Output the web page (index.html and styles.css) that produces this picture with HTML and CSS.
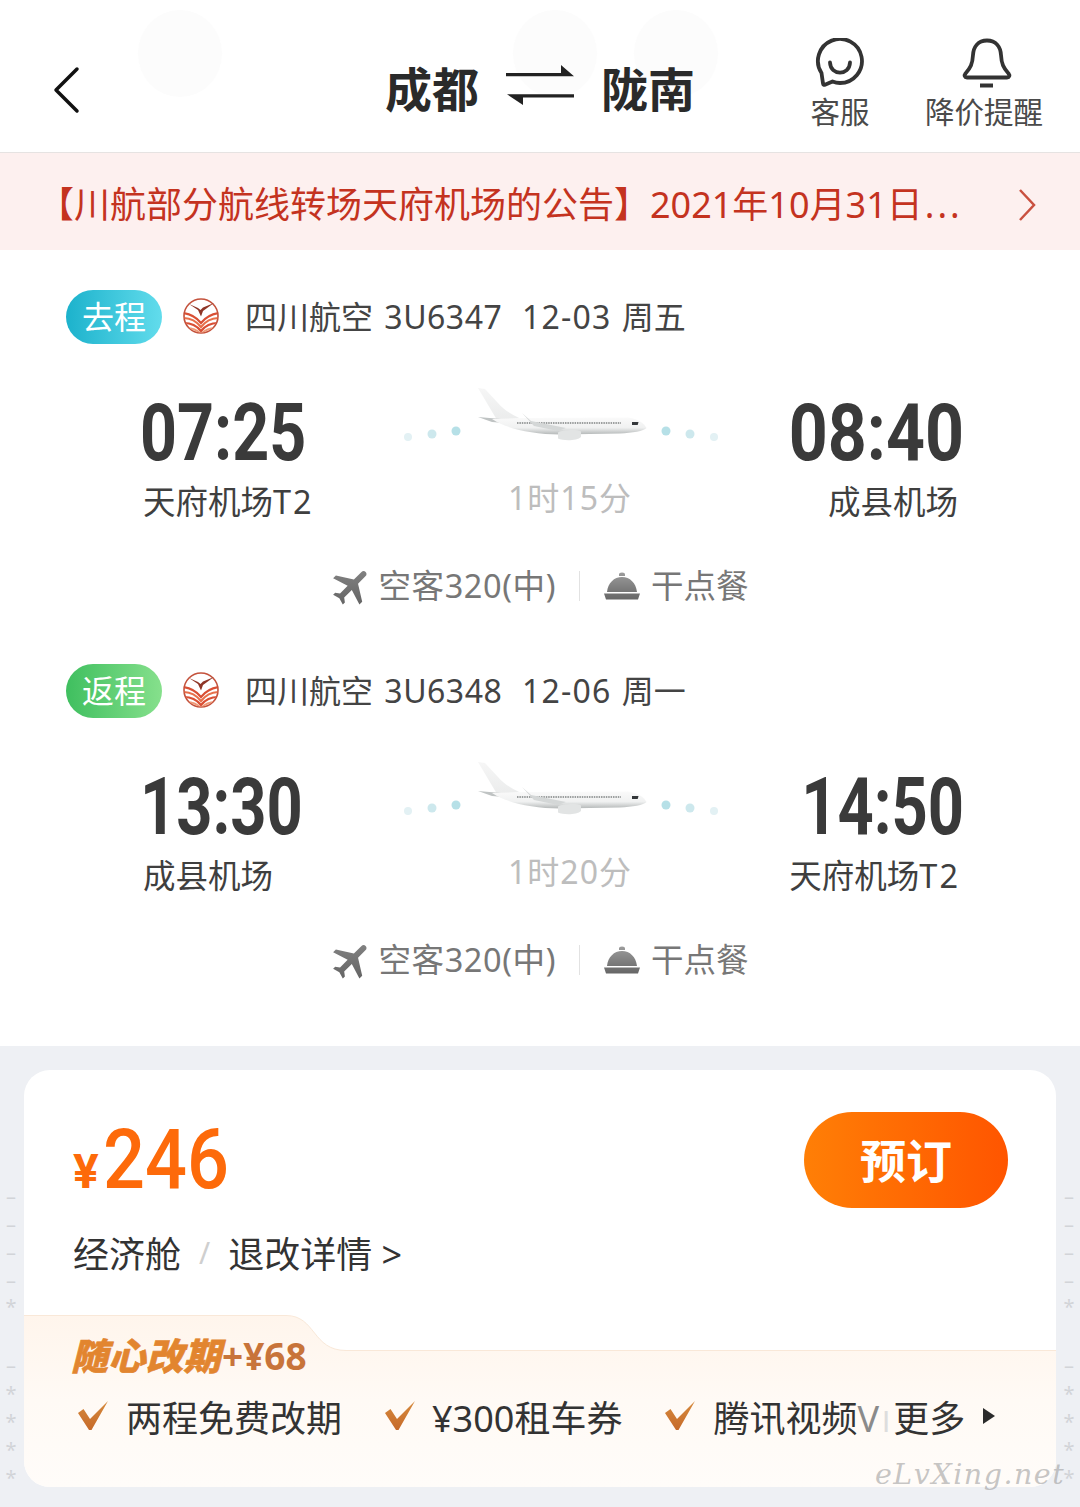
FILE: index.html
```html
<!DOCTYPE html>
<html lang="zh-CN">
<head>
<meta charset="utf-8">
<title>成都 陇南</title>
<link rel="stylesheet" href="styles.css">
</head>
<body>
<div class="page">
  <header class="topbar">
    <span class="ghost ghost-a"></span><span class="ghost ghost-b"></span><span class="ghost ghost-c"></span>
    <svg class="back" viewBox="0 0 28 48"><path d="M25 3 4 24l21 21"/></svg>
    <div class="route">
      <span>成都</span>
      <svg class="swap" viewBox="0 0 68 40"><path d="M0 8h55V0l13 11.200H0zM1 29.300h67v3.200H17V40L1 29.300z"/></svg>
      <span>陇南</span>
    </div>
    <div class="action action-service">
      <svg class="action-icon" viewBox="0 0 50 50"><path class="line" d="M17.500 43.500C20 44.500 22.500 45 25 45A22 22 0 1 0 6.500 35L8 45.500C8.200 47 9 47.200 10 46.700z"/><path class="line" d="M15 24.500C15.500 38 34.500 38 35 24.500"/></svg>
      <span>客服</span>
    </div>
    <div class="action action-alert">
      <svg class="action-icon action-bell" viewBox="0 0 50 50"><path class="line" d="M25 2.500C16 2.500 11.500 9 11 17 10.500 26 8.500 30 3.500 35.500 2 37.500 2.500 39.500 5 39.500H45C47.500 39.500 48 37.500 46.500 35.500 41.500 30 39.500 26 39 17 38.500 9 34 2.500 25 2.500z"/><path class="clapper" d="M18 45.500h13v4H18z"/></svg>
      <span>降价提醒</span>
    </div>
  </header>

  <div class="notice">
    <span class="notice-text">【川航部分航线转场天府机场的公告】2021年10月31日<span class="dots">...</span></span>
    <svg class="notice-arrow" viewBox="0 0 18 34"><path d="m2 2 14 15L2 32"/></svg>
  </div>

  <main class="flights">
    <section class="leg">
      <div class="leg-head">
        <span class="tag tag-out">去程</span>
        <svg class="airline" viewBox="0 0 36 36"><use href="#logo"/></svg>
        <span class="leg-info">四川航空 <span class="flightno">3U6347</span>&nbsp;&nbsp;<span class="date">12-03</span> <span class="dow">周五</span></span>
      </div>
      <div class="times">
        <div class="end">
          <div class="clock clock-mid">07:25</div>
          <div class="port">天府机场<span class="port-code">T2</span></div>
        </div>
        <div class="mid">
          <svg class="plane" viewBox="0 0 325 60"><use href="#plane"/></svg>
          <div class="dur">1时15分</div>
        </div>
        <div class="end end-right">
          <div class="clock clock-wide">08:40</div>
          <div class="port port-right">成县机场</div>
        </div>
      </div>
      <div class="attrs">
        <svg class="attr-plane" viewBox="0 0 24 24"><use href="#jet"/></svg>
        <span class="attr-text attr-type">空客320(中)</span>
        <i class="attr-rule"></i>
        <svg class="attr-meal" viewBox="0 0 36 30"><use href="#cloche"/></svg>
        <span class="attr-text">干点餐</span>
      </div>
    </section>

    <section class="leg">
      <div class="leg-head">
        <span class="tag tag-back">返程</span>
        <svg class="airline" viewBox="0 0 36 36"><use href="#logo"/></svg>
        <span class="leg-info">四川航空 <span class="flightno">3U6348</span>&nbsp;&nbsp;<span class="date">12-06</span> <span class="dow">周一</span></span>
      </div>
      <div class="times">
        <div class="end">
          <div class="clock clock-tight">13:30</div>
          <div class="port">成县机场</div>
        </div>
        <div class="mid">
          <svg class="plane" viewBox="0 0 325 60"><use href="#plane"/></svg>
          <div class="dur">1时20分</div>
        </div>
        <div class="end end-right">
          <div class="clock clock-tight">14:50</div>
          <div class="port port-right">天府机场<span class="port-code">T2</span></div>
        </div>
      </div>
      <div class="attrs">
        <svg class="attr-plane" viewBox="0 0 24 24"><use href="#jet"/></svg>
        <span class="attr-text attr-type">空客320(中)</span>
        <i class="attr-rule"></i>
        <svg class="attr-meal" viewBox="0 0 36 30"><use href="#cloche"/></svg>
        <span class="attr-text">干点餐</span>
      </div>
    </section>
  </main>

  <div class="lower">
    <div class="rail rail-left">
      <span>–</span><span>–</span><span>–</span><span>–</span><span class="star-first">*</span><span class="after-gap">–</span><span>*</span><span>*</span><span>*</span><span>*</span>
    </div>
    <div class="rail rail-right">
      <span>–</span><span>–</span><span>–</span><span>–</span><span class="star-first">*</span><span class="after-gap">–</span><span>*</span><span>*</span><span>*</span><span>*</span>
    </div>
    <article class="fare">
      <div class="fare-top">
        <div class="price"><span class="yen">¥</span><span class="amount">246</span></div>
        <div class="book">预订</div>
      </div>
      <div class="cabin">
        <span>经济舱</span><span class="slash">/</span><span>退改详情 &gt;</span>
      </div>
      <div class="promo">
        <svg class="promo-shape" viewBox="0 0 1032 172" preserveAspectRatio="none">
          <defs>
            <linearGradient id="promoFill" x1="0" y1="0" x2="0" y2="1">
              <stop offset="0" stop-color="#fff5ec"/><stop offset=".5" stop-color="#fffaf5"/><stop offset="1" stop-color="#fffcf9"/>
            </linearGradient>
          </defs>
          <path d="M0 0.500H262C292 0.500 288 35.500 322 35.500H1032V172H0z" fill="url(#promoFill)"/>
          <path d="M0 0.500H262C292 0.500 288 35.500 322 35.500H1032" fill="none" stroke="#f9e8d8"/>
        </svg>
        <div class="promo-title"><span class="promo-name">随心改期</span><span class="promo-price">+¥68</span></div>
        <div class="perks">
          <div class="perk">
            <svg class="check" viewBox="0 0 30 29"><use href="#tick"/></svg>
            <span>两程免费改期</span>
          </div>
          <div class="perk">
            <svg class="check check-tight" viewBox="0 0 30 29"><use href="#tick"/></svg>
            <span>¥300租车券</span>
          </div>
          <div class="perk">
            <svg class="check" viewBox="0 0 30 29"><use href="#tick"/></svg>
            <span>腾讯视频<span class="perk-fade">V</span><span class="perk-fade2">I</span></span>
            <span class="more">更多</span>
            <svg class="more-arrow" viewBox="0 0 12 16"><path d="M0 0l12 8-12 8z"/></svg>
          </div>
        </div>
      </div>
    </article>
    <span class="watermark">eLvXing.net</span>
  </div>
</div>

<svg class="defs" width="0" height="0" aria-hidden="true">
  <defs>
    <linearGradient id="bodyFill" x1="0" y1="0" x2="0" y2="1">
      <stop offset="0" stop-color="#fafafa"/><stop offset=".6" stop-color="#f0f1f1"/><stop offset="1" stop-color="#b4b8b8"/>
    </linearGradient>
    <linearGradient id="tailFill" x1="0" y1="0" x2="0" y2="1">
      <stop offset="0" stop-color="#f6f6f6"/><stop offset="1" stop-color="#ebecec"/>
    </linearGradient>
    <linearGradient id="jetFill" x1="0" y1="0" x2="1" y2="1">
      <stop offset="0" stop-color="#8b8b8b"/><stop offset="1" stop-color="#5e5e5e"/>
    </linearGradient>
    <linearGradient id="clocheFill" x1="0" y1="0" x2="0" y2="1">
      <stop offset="0" stop-color="#9c9c9c"/><stop offset="1" stop-color="#666"/>
    </linearGradient>
    <linearGradient id="tickFill" x1="0" y1="0" x2="0" y2="1">
      <stop offset="0" stop-color="#d68a3c"/><stop offset="1" stop-color="#c66a2a"/>
    </linearGradient>
    <clipPath id="logoClip"><circle cx="18" cy="18" r="16.500"/></clipPath>
    <symbol id="plane" viewBox="400 385 325 60">
      <circle cx="408" cy="437" r="4" fill="#e3f1f4"/>
      <circle cx="432" cy="434" r="4.500" fill="#cde8ed"/>
      <circle cx="456" cy="431" r="4.500" fill="#b6e0e7"/>
      <circle cx="666" cy="431" r="4.500" fill="#b6e0e7"/>
      <circle cx="690" cy="434" r="4.500" fill="#cde8ed"/>
      <circle cx="714" cy="437" r="4" fill="#e3f1f4"/>
      <path d="M478 388 485 389 498 403C504 410 511 414 520 418.500L497 420z" fill="url(#tailFill)"/>
      <path d="M478 417 501 419 504 423 492 422z" fill="#bfc3c3"/>
      <path d="M492 419 522 418 628 417.500C636 418 644 423 646.500 428 644 431 632 433 620 433.500L560 434.500C530 434 505 428 492 419z" fill="url(#bodyFill)"/>
      <path d="M517 423H621" stroke="#7f8383" stroke-width="1.700" stroke-dasharray="1.500 .9"/>
      <path d="M632 422h6.500l-.8 3h-5.700z" fill="#33373a"/>
      <path d="M522 413 531 421 566 428 558 431 534 426z" fill="#d4d7d7"/>
      <path d="M558 432.500C563 429.500 578 429.500 581 431.500V437C577 441 563 441 558 438.500z" fill="#e2e4e4"/>
    </symbol>
    <symbol id="jet" viewBox="0 0 24 24">
      <path fill="url(#jetFill)" transform="rotate(45 12 12)" d="M21 16v-2l-8-5V3.500c0-.83-.67-1.500-1.500-1.500S10 2.670 10 3.500V9l-8 5v2l8-2.500V19l-2 1.500V22l3.500-1 3.500 1v-1.500L13 19v-5.500l8 2.500z"/>
    </symbol>
    <symbol id="cloche" viewBox="0 0 36 30">
      <path fill="url(#clocheFill)" d="M15 3.500a3 2 0 0 1 6 0V5h-6zM3 21C4 12 10 6 18 6s14 6 15 15zM0 22.500h36L34 28.500H2z"/>
    </symbol>
    <symbol id="logo" viewBox="0 0 36 36">
      <circle cx="18" cy="18" r="17" fill="#fff" stroke="#c4523c" stroke-width="1.600"/>
      <g clip-path="url(#logoClip)" fill="none" stroke="#d94f34" stroke-width="2.200">
        <path d="M0 15C8 16 14 20 18 25 22 20 28 16 36 15"/>
        <path d="M0 20C8 20 14 24 18 29 22 24 28 20 36 20" stroke="#e8704a"/>
        <path d="M1 25C8 25 14 28 18 33 22 28 28 25 35 25"/>
        <path d="M4 30C9 30 14 32 18 36 22 32 27 30 32 30" stroke="#ef9a78"/>
      </g>
      <path d="M6 6 15 12 18 18.500 20 13 31 5 20 9.500 17.500 12 15 10z" fill="#8e3526"/>
    </symbol>
    <symbol id="tick" viewBox="0 0 30 29">
      <path fill="url(#tickFill)" d="M0 12 5.500 8 12 18 30 0 13.500 29H11z"/>
    </symbol>
  </defs>
</svg>
</body>
</html>
```

FILE: styles.css
```css
* { box-sizing: border-box; }
html, body { margin: 0; padding: 0; }
body {
  width: 1080px;
  height: 1507px;
  overflow: hidden;
  background: #fff;
  font-family: "Noto Sans", "Noto Sans CJK SC", sans-serif;
  color: #333;
}
.page { width: 1080px; height: 1507px; display: flex; flex-direction: column; }
.defs { position: absolute; }

/* Top bar */
.topbar {
  position: relative;
  height: 153px;
  flex: none;
  display: flex;
  align-items: flex-start;
  border-bottom: 1px solid #e6e3e2;
}
.ghost { position: absolute; top: 10px; width: 84px; height: 87px; border-radius: 50%; background: #fcfcfc; }
.ghost-a { left: 138px; }
.ghost-b { left: 513px; }
.ghost-c { left: 634px; }
.back {
  width: 28px;
  height: 48px;
  margin: 66px 0 0 52px;
  flex: none;
  fill: none;
  stroke: #111;
  stroke-width: 3.500;
  stroke-linecap: round;
  stroke-linejoin: round;
}
.route {
  position: relative;
  margin: 59px 0 0 305px;
  display: flex;
  align-items: center;
  height: 60px;
  font-size: 47px;
  font-weight: 700;
  color: #2a2a2a;
  line-height: 60px;
}
.swap { width: 68px; height: 40px; margin: -8px 27px 0 27px; fill: #222; }
.action { position: relative; display: flex; flex-direction: column; align-items: center; font-size: 29.500px; line-height: 40px; color: #4a4a4a; margin-top: 38px; }
.action-service { margin-left: 115px; width: 60px; }
.action-alert { margin-left: 55px; width: 118px; }
.action-icon { width: 50px; height: 50px; margin-bottom: 4px; }
.action-bell { margin-left: 5px; }
.action-icon .line { fill: none; stroke: #333; stroke-width: 3.800; stroke-linejoin: round; stroke-linecap: round; }
.action-icon .clapper { fill: #333; }

/* Notice */
.notice {
  height: 97px;
  flex: none;
  background: #fdf0ef;
  display: flex;
  align-items: center;
  padding-left: 38px;
}
.notice-text { font-size: 36px; line-height: 50px; color: #c4331f; white-space: nowrap; width: 980px; margin-top: 6px; }
.dots { letter-spacing: 3px; margin-left: 2px; }
.notice-arrow { width: 18px; height: 34px; fill: none; stroke: #c9503f; stroke-width: 2.500; flex: none; margin-top: 6px; }

/* Flight legs */
.flights { height: 796px; flex: none; padding-top: 40px; }
.leg { height: 374px; }
.leg-head { display: flex; align-items: center; height: 54px; padding-left: 66px; }
.tag {
  width: 96px;
  height: 54px;
  border-radius: 27px;
  color: #fff;
  font-size: 32px;
  line-height: 54px;
  text-align: center;
}
.tag-out { background: linear-gradient(90deg, #1cb2cc, #62dcec); }
.tag-back { background: linear-gradient(90deg, #3fbf5f, #86e08c); }
.airline { width: 36px; height: 36px; margin: -2px 0 0 21px; flex: none; }
.leg-info { font-size: 32px; line-height: 54px; color: #444; margin-left: 26px; white-space: nowrap; }
.flightno { margin-left: 3px; letter-spacing: .5px; }
.date { margin-left: 3px; letter-spacing: 1.200px; }
.dow { margin-left: 2px; }

.times {
  display: grid;
  grid-template-columns: 257px 325px 237px;
  margin: 41px 0 0 143px;
  height: 142px;
}
.end { display: flex; flex-direction: column; align-items: flex-start; }
.end-right { align-items: flex-end; }
.clock {
  font-family: "Roboto", sans-serif;
  font-weight: 700;
  font-size: 80px;
  line-height: 92px;
  color: #3a3a3a;
  white-space: nowrap;
  transform-origin: 0 50%;
  margin-left: -3px;
  position: relative;
  top: 2px;
}
.end-right .clock { transform-origin: 100% 50%; margin: 0 -2px 0 0; }
.clock-mid { transform: scaleX(.807); }
.clock-wide { transform: scaleX(.851); }
.clock-tight { transform: scaleX(.79); }
.port { font-size: 32.500px; line-height: 50px; color: #3f3f3f; white-space: nowrap; }
.port-code { letter-spacing: 2px; margin-right: -2px; }
.port-right { margin-right: 4px; }
.mid { display: flex; flex-direction: column; align-items: center; }
.plane { width: 325px; height: 60px; display: block; }
.dur { font-size: 32px; line-height: 50px; margin-top: 28px; color: #bdbdbd; padding-left: 15px; letter-spacing: 1px; }

.attrs { display: flex; align-items: center; justify-content: center; height: 40px; margin-top: 39px; padding-right: 2px; }
.attr-plane { width: 47px; height: 47px; margin-right: 2px; flex: none; }
.attr-text { font-size: 32.500px; line-height: 40px; color: #777; white-space: nowrap; }
.attr-type { letter-spacing: .6px; }
.attr-rule { width: 1px; height: 30px; background: #e2e2e2; margin: 0 24px 0 23px; }
.attr-meal { width: 36px; height: 30px; margin-right: 11px; flex: none; }

/* Fare card */
.lower { position: relative; flex: 1; background: #eef0f4; padding: 24px; }
.rail { position: absolute; top: 137px; width: 22px; display: flex; flex-direction: column; align-items: center; color: #d2d4d8; font-size: 20px; }
.rail span { height: 28px; line-height: 28px; }
.rail .star-first { margin-top: -2px; }
.rail .after-gap { margin-top: 31px; }
.rail-left { left: 0; }
.rail-right { right: 0; }
.fare { position: relative; height: 417px; background: #fff; border-radius: 26px; overflow: hidden; }
.fare-top { display: flex; justify-content: space-between; padding: 42px 48px 0 49px; height: 138px; }
.price { display: flex; align-items: baseline; color: #fd6a0a; font-family: "Roboto", sans-serif; height: 96px; }
.yen { font-size: 48px; font-weight: 700; margin-right: 4px; }
.amount { font-size: 83px; font-weight: 500; line-height: 96px; transform: scaleX(.89); transform-origin: 0 50%; }
.book {
  width: 204px;
  height: 96px;
  border-radius: 48px;
  background: linear-gradient(90deg, #ff7f06, #ff5500);
  color: #fff;
  font-size: 46px;
  font-weight: 700;
  line-height: 96px;
  text-align: center;
}
.cabin { display: flex; align-items: center; height: 50px; margin-top: 19px; padding-left: 49px; font-size: 36px; color: #333; white-space: nowrap; }
.slash { color: #cfcfcf; margin: 0 18px; font-size: 30px; }
.promo { position: absolute; left: 0; right: 0; bottom: 0; height: 172px; padding: 18px 0 0 48px; }
.promo-shape { position: absolute; inset: 0; width: 100%; height: 100%; }
.promo-title { position: relative; display: flex; align-items: center; height: 46px; font-weight: 700; font-size: 37px; line-height: 46px; }
.promo-name { color: #e2852f; font-style: italic; font-weight: 900; -webkit-text-stroke: .6px #e2852f; margin: 0 1px 0 -1px; letter-spacing: .5px; }
.promo-price { color: #c8743a; }
.perks { position: relative; display: flex; align-items: center; gap: 43px; height: 50px; margin-top: 12px; padding-left: 6px; font-size: 36px; color: #333; white-space: nowrap; }
.perk { display: flex; align-items: center; }
.check { width: 30px; height: 29px; margin: 0 18px 2px 0; flex: none; }
.check-tight { margin-right: 17px; }
.perk-fade { color: #8a8a8a; }
.perk-fade2 { color: #ddd; font-family: "Roboto", sans-serif; font-size: 30px; margin-left: 3px; }
.more { margin-left: 3px; }
.more-arrow { width: 12px; height: 16px; margin-left: 18px; fill: #2b2b2b; flex: none; }
.watermark {
  position: absolute;
  left: 875px;
  top: 404px;
  font-family: "DejaVu Serif", serif;
  font-style: italic;
  font-size: 28.500px;
  letter-spacing: 1.500px;
  line-height: 50px;
  color: rgba(150, 150, 150, .55);
  white-space: nowrap;
}
```
